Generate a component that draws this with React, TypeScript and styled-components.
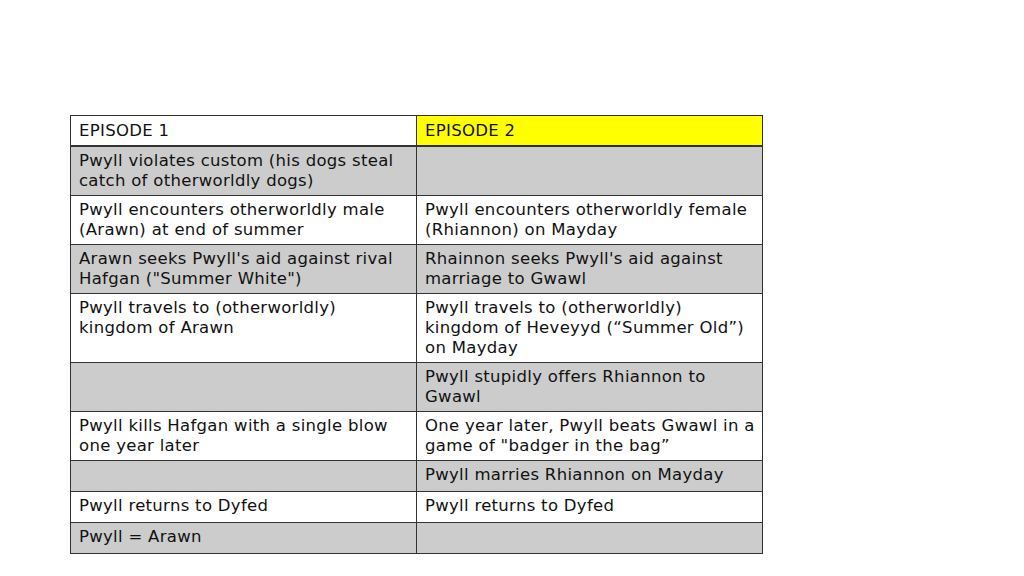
import React from 'react';
import styled, { createGlobalStyle } from 'styled-components';

const GlobalStyle = createGlobalStyle`
    html, body {
        margin: 0;
        padding: 0;
        background: #fff;
    }
    body {
        font-family: "DejaVu Sans", Verdana, sans-serif;
    }
`;

// each cell is a list of lines, wrapped as on the slide
type Row = { left: string[]; right: string[] };

const rows: Row[] = [
    { left: ['Pwyll violates custom (his dogs steal', 'catch of otherworldly dogs)'], right: [] },
    {
        left: ['Pwyll encounters otherworldly male', '(Arawn) at end of summer'],
        right: ['Pwyll encounters otherworldly female', '(Rhiannon) on Mayday'],
    },
    {
        left: ['Arawn seeks Pwyll\'s aid against rival', 'Hafgan ("Summer White")'],
        right: ['Rhainnon seeks Pwyll\'s aid against', 'marriage to Gwawl'],
    },
    {
        left: ['Pwyll travels to (otherworldly)', 'kingdom of Arawn'],
        right: ['Pwyll travels to (otherworldly)', 'kingdom of Heveyyd (\u201cSummer Old\u201d)', 'on Mayday'],
    },
    { left: [], right: ['Pwyll stupidly offers Rhiannon to', 'Gwawl'] },
    {
        left: ['Pwyll kills Hafgan with a single blow', 'one year later'],
        right: ['One year later, Pwyll beats Gwawl in a', 'game of "badger in the bag\u201d'],
    },
    { left: [], right: ['Pwyll marries Rhiannon on Mayday'] },
    { left: ['Pwyll returns to Dyfed'], right: ['Pwyll returns to Dyfed'] },
    { left: ['Pwyll = Arawn'], right: [] },
];

const Lines: React.FC<{ lines: string[] }> = ({ lines }) => (
    <>
        {lines.map((line, i) => (
            <Line key={i}>{line}</Line>
        ))}
    </>
);

const App: React.FC = () => {
    return (
        <>
            <GlobalStyle />
            <Page>
                <Table>
                    <colgroup>
                        <col style={{ width: 346 }} />
                        <col style={{ width: 346 }} />
                    </colgroup>
                    <thead>
                        <tr>
                            <HeadCell>EPISODE 1</HeadCell>
                            <HeadCell $highlight>EPISODE 2</HeadCell>
                        </tr>
                    </thead>
                    <tbody>
                        {rows.map((row, i) => (
                            <tr key={i}>
                                <Cell $shaded={i % 2 === 0}>
                                    <Lines lines={row.left} />
                                </Cell>
                                <Cell $shaded={i % 2 === 0}>
                                    <Lines lines={row.right} />
                                </Cell>
                            </tr>
                        ))}
                    </tbody>
                </Table>
            </Page>
        </>
    );
};

export default App;

const Page = styled.div`
    width: 1024px;
    height: 576px;
    padding: 115px 0 0 70px;
    box-sizing: border-box;
`;

const Table = styled.table`
    width: 692px;
    table-layout: fixed;
    border-collapse: collapse;
    font-size: 16.5px;
    letter-spacing: 0.3px;
    line-height: 20px;
    color: #111;
`;

const HeadCell = styled.th<{ $highlight?: boolean }>`
    height: 29px;
    padding: 0 8px;
    text-align: left;
    font-weight: normal;
    vertical-align: middle;
    white-space: nowrap;
    background: ${p => (p.$highlight ? '#ffff00' : '#fff')};
    border: 1px solid #333;
    border-bottom: 2px solid #333;
`;

const Cell = styled.td<{ $shaded: boolean }>`
    height: 22px;
    padding: 4px 8px;
    vertical-align: top;
    overflow: hidden;
    background: ${p => (p.$shaded ? '#cccccc' : '#fff')};
    border: 1px solid #333;
`;

const Line = styled.div`
    white-space: nowrap;
`;
